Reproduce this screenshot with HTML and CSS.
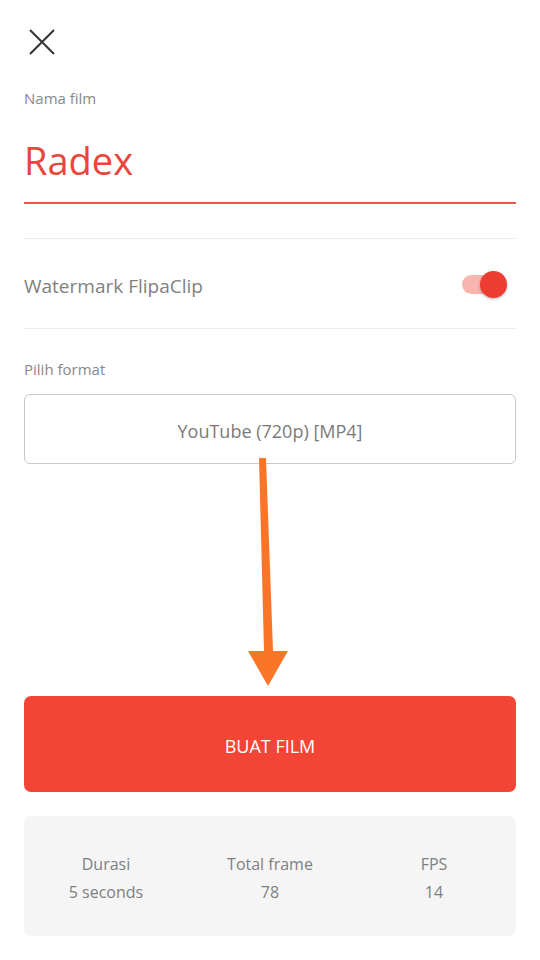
FILE: index.html
```html
<!DOCTYPE html>
<html lang="id">
<head>
<meta charset="utf-8">
<link rel="stylesheet" href="styles.css">
</head>
<body>
<div class="page">
  <div class="close">
    <svg width="28" height="28" viewBox="0 0 28 28"><path d="M2 2 L26 26 M26 2 L2 26" stroke="#333" stroke-width="2" fill="none"/></svg>
  </div>
  <div class="label name-label">Nama film</div>
  <div class="name-field">Radex</div>
  <div class="divider first"></div>
  <div class="row">
    <span class="row-text">Watermark FlipaClip</span>
    <span class="toggle"><span class="track"></span><span class="knob"></span></span>
  </div>
  <div class="divider"></div>
  <div class="label format-label">Pilih format</div>
  <div class="select">YouTube (720p) [MP4]</div>
  <div class="spacer"></div>
  <div class="button">BUAT FILM</div>
  <div class="stats">
    <div class="stat"><div>Durasi</div><div>5 seconds</div></div>
    <div class="stat"><div>Total frame</div><div>78</div></div>
    <div class="stat"><div>FPS</div><div>14</div></div>
  </div>
  <svg class="arrow" width="60" height="240" viewBox="0 0 60 240"><polygon points="25,0 32,0 39,193 54,193 34,228 14,193 30,193" fill="#fb7529"/></svg>
</div>
</body>
</html>
```
FILE: styles.css
```css
html, body { margin: 0; padding: 0; background: #fff; }
body { font-family: "Open Sans", "Noto Sans", sans-serif; color: #7b7b7b; }
.page { position: relative; width: 540px; height: 960px; padding: 0 24px; box-sizing: border-box; display: flex; flex-direction: column; }
.close { margin-top: 28px; margin-left: 4px; width: 28px; height: 28px; }
.label { font-size: 15px; color: #888; line-height: 20px; }
.name-label { margin-top: 32px; }
.name-field { margin-top: 27px; font-size: 38px; color: #e8463a; line-height: 50px; padding-bottom: 17px; border-bottom: 2px solid #e25a4e; font-weight: 500; }
.divider { height: 1px; background: #ececec; }
.divider.first { margin-top: 34px; }
.row { height: 89px; display: flex; align-items: center; justify-content: space-between; }
.row-text { font-size: 19px; color: #808080; padding-top: 4px; }
.toggle { position: relative; width: 52px; height: 30px; margin-right: 4px; }
.track { position: absolute; left: 2px; top: 6px; width: 38px; height: 19px; border-radius: 10px; background: #f8b5b0; }
.knob { position: absolute; left: 20px; top: 2px; width: 27px; height: 27px; border-radius: 50%; background: #ee3d32; box-shadow: 0 1px 3px rgba(0,0,0,0.3); }
.format-label { margin-top: 30px; }
.select { margin-top: 15px; height: 70px; box-sizing: border-box; padding-top: 4px; border: 1px solid #c8c8c8; border-radius: 6px; display: flex; align-items: center; justify-content: center; font-size: 18px; color: #7a7a7a; }
.spacer { height: 232px; }
.button { height: 96px; box-sizing: border-box; padding-top: 4px; background: #f24535; border-radius: 7px; color: #fff; font-size: 18px; display: flex; align-items: center; justify-content: center; }
.stats { margin-top: 24px; height: 120px; background: #f5f5f5; border-radius: 7px; display: flex; align-items: center; padding-top: 4px; box-sizing: border-box; }
.stat { flex: 1; text-align: center; font-size: 16px; line-height: 28px; color: #7f7f7f; }
.arrow { position: absolute; left: 234px; top: 458px; }
```
